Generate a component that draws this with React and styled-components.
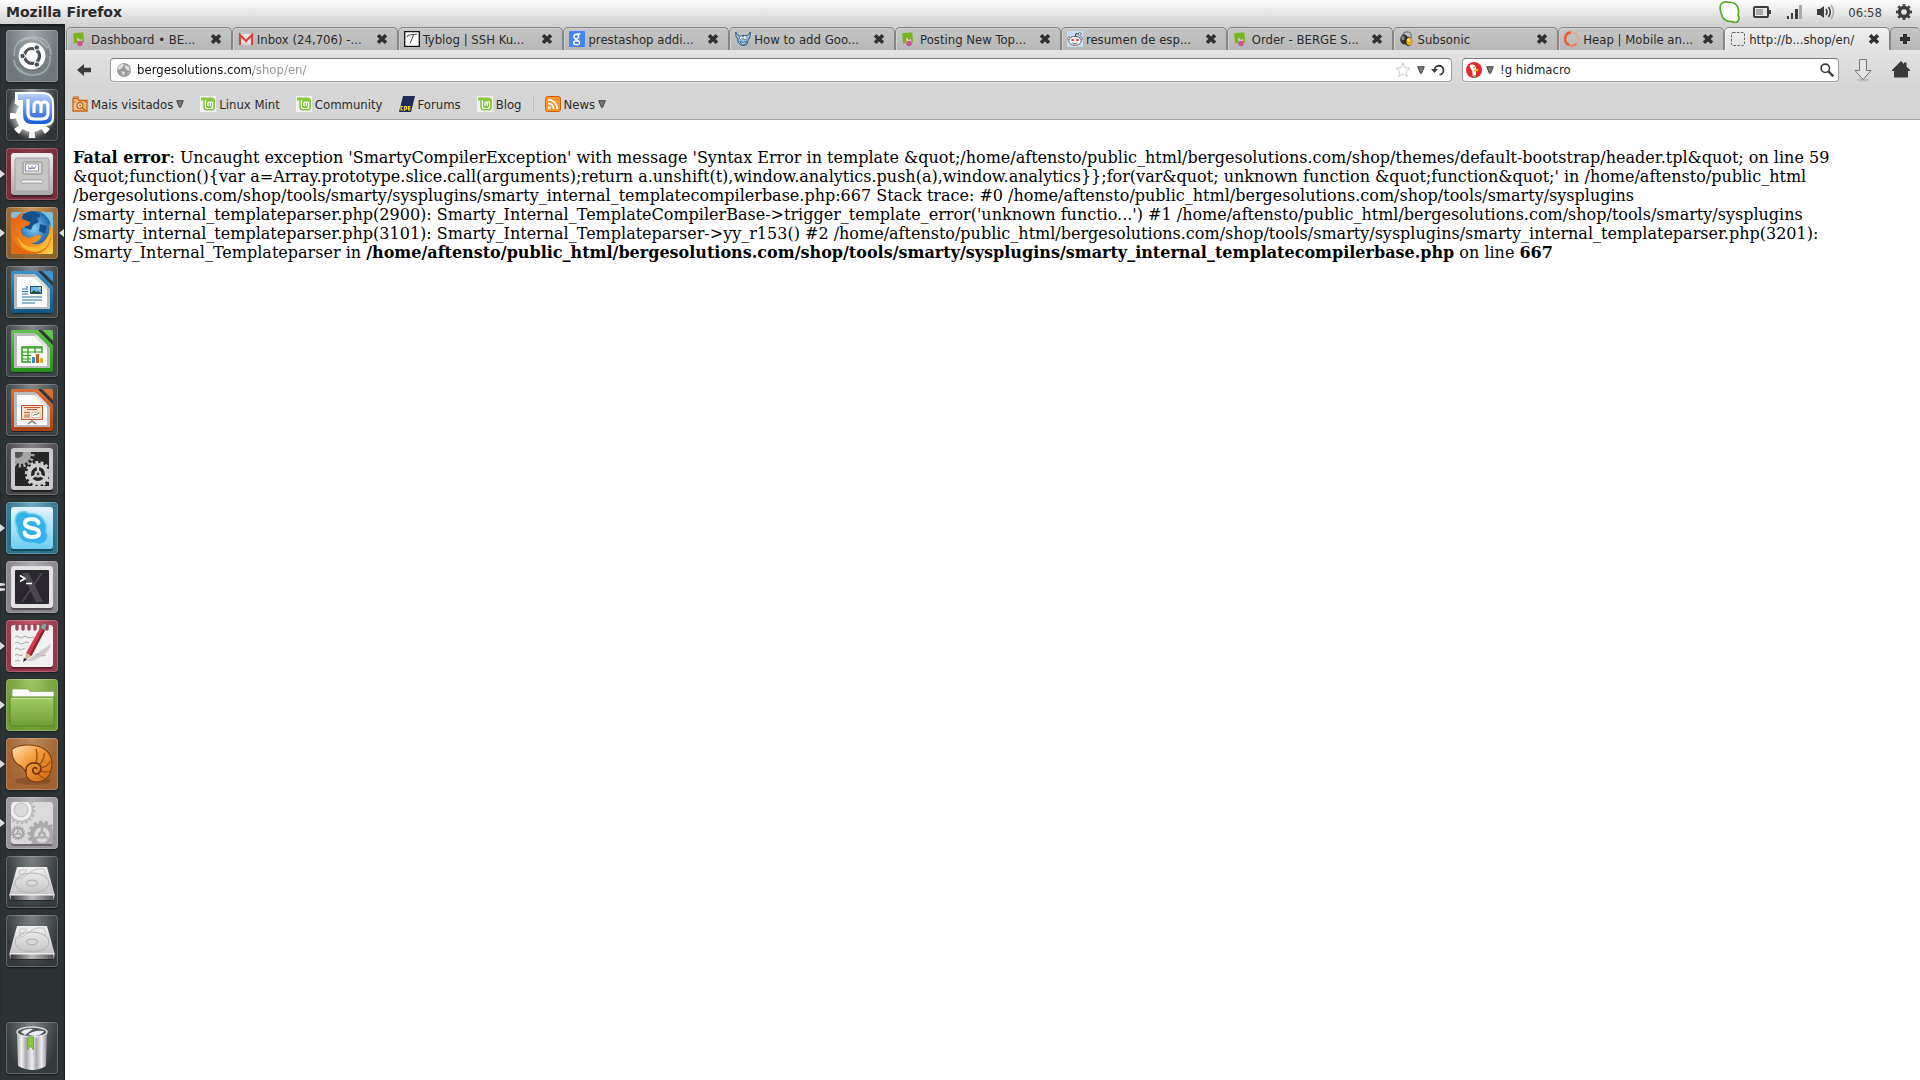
import { useState } from "react";
import styled, { createGlobalStyle } from "styled-components";

const GlobalStyle = createGlobalStyle`
  * {
    box-sizing: border-box;
  }
  body {
    margin: 0;
    background: #fff;
    color: #2b2b2b;
    font-family: "DejaVu Sans Condensed", "DejaVu Sans", sans-serif;
    font-size: 13px;
  }
  button, input {
    font: inherit;
    color: inherit;
    border: none;
    background: none;
    padding: 0;
    margin: 0;
    outline: none;
  }
  svg {
    display: block;
    flex: none;
  }
`;

const Desktop = styled.div`
  display: flex;
  flex-direction: column;
  min-height: 100vh;
`;

const TopBar = styled.header`
  display: flex;
  align-items: center;
  justify-content: space-between;
  height: 24px;
  padding: 0 8px 0 6px;
  background: linear-gradient(#fefefe, #d2d2d2);
`;

const WindowTitle = styled.h1`
  margin: 0;
  font-family: "DejaVu Sans", sans-serif;
  font-size: 14px;
  line-height: 22px;
  font-weight: 700;
`;

const Indicators = styled.div`
  display: flex;
  align-items: center;
`;

const Indicator = styled.button`
  display: flex;
  margin-right: ${(props) => props.$gap || 0}px;
  color: #3c3c3c;
`;

const Workspace = styled.div`
  display: flex;
  flex: 1;
`;

const Launcher = styled.nav`
  display: flex;
  flex-direction: column;
  gap: 7px;
  width: 65px;
  flex: none;
  padding: 6px 0;
  background: #2d3335;
  border-right: 1px solid #1f2324;
  box-shadow: inset 0 3px 3px -1px #16191a;
`;

const LauncherItem = styled.div`
  display: flex;
  align-items: center;
  margin-top: ${(props) => (props.$last ? "auto" : "0")};
`;

const Tile = styled.button`
  display: block;
  width: 52px;
  height: 52px;
  border-radius: 4px;
  overflow: hidden;
  background: radial-gradient(ellipse at 50% 0, ${(props) => props.$glow}, ${(props) => props.$fill} 75%);
  box-shadow: inset 0 0 0 1px rgba(255, 255, 255, 0.22), 0 1px 2px rgba(0, 0, 0, 0.5);
`;

const Browser = styled.div`
  flex: 1;
  min-width: 0;
`;

const TabStrip = styled.div`
  display: flex;
  height: 27px;
  padding: 3px 0 0 1px;
  background: #d2d2d2;
  border-bottom: 1px solid #e2e2e2;
`;

const Tab = styled.div`
  display: flex;
  align-items: center;
  flex: 1;
  min-width: 0;
  padding: 0 9px 0 5px;
  border: 1px solid #858585;
  border-bottom: none;
  border-radius: 5px 5px 0 0;
  box-shadow: inset 1px 1px 0 ${(props) => (props.$active ? "#f8f8f8" : "#d0d0d0")};
  background: ${(props) =>
    props.$active ? "linear-gradient(#efefef, #e2e2e2)" : "linear-gradient(#c6c6c6, #b7b7b7)"};
`;

const TabButton = styled.button`
  display: flex;
  align-items: center;
  gap: 3px;
  flex: 1;
  min-width: 0;
  white-space: nowrap;
`;

const TabClose = styled.button`
  display: flex;
  color: #303030;
`;

const NewTab = styled.button`
  display: flex;
  align-items: center;
  justify-content: center;
  width: 30px;
  border: 1px solid #858585;
  border-width: 1px 0 0 1px;
  border-radius: 5px 5px 0 0;
  color: #303030;
  background: linear-gradient(#c6c6c6, #b7b7b7);
`;

const Toolbars = styled.div`
  background: linear-gradient(#e2e2e2, #d5d5d5 35px);
  border-bottom: 1px solid #a3a3a3;
`;

const NavBar = styled.div`
  display: flex;
  align-items: center;
  height: 38px;
  padding: 0 10px 1px 11px;
`;

const NavButton = styled.button`
  display: flex;
  justify-content: center;
  width: ${(props) => props.$width}px;
  margin-right: ${(props) => props.$gap || 0}px;
  color: #3a3a3a;
`;

const Field = styled.label`
  display: flex;
  align-items: center;
  height: 24px;
  padding: 0 6px;
  border: 1px solid #9a9a9a;
  border-top-color: #777;
  border-radius: 4px;
  background: #fff;
  box-shadow: 0 1px 0 #e6e6e6;
`;

const UrlField = styled(Field)`
  flex: 1;
  gap: 6px;
`;

const SearchField = styled(Field)`
  width: 377px;
  gap: 4px;
  margin: 0 9px 0 10px;
  padding: 0 3px;
`;

/* the path part of the address is greyed out after the domain */
const UrlInput = styled.input`
  flex: 1;
  min-width: 0;
  background: linear-gradient(to right, #111 116px, #919191 116px);
  background-clip: text;
  -webkit-background-clip: text;
  color: transparent;
`;

const SearchInput = styled.input`
  flex: 1;
  min-width: 0;
  margin-left: 2px;
  color: #222;
`;

const BookmarkBar = styled.div`
  display: flex;
  align-items: center;
  gap: 16px;
  height: 30px;
  padding-left: 7px;
`;

const Bookmark = styled.a`
  display: flex;
  align-items: center;
  gap: 3px;
  color: inherit;
  text-decoration: none;
  white-space: nowrap;
`;

const FolderButton = styled.button`
  display: flex;
  align-items: center;
  gap: 3px;
  white-space: nowrap;
`;

const Separator = styled.span`
  width: 1px;
  height: 16px;
  margin: 0 -5px;
  background: #bdbdbd;
`;

const Page = styled.main`
  padding: 28px 8px 8px;
  color: #000;
  font-family: "DejaVu Serif", serif;
  font-size: 16px;
  line-height: 19px;
`;

const Message = styled.p`
  margin: 0;
`;

const Triangle = () => (
  <svg width="8" height="8" viewBox="0 0 8 8">
    <path d="M.7.7h6.6L4.6 7.3H3.4z" fill="#777" stroke="#444" strokeWidth="1" />
  </svg>
);

const Cross = () => (
  <svg width="12" height="12" viewBox="0 0 12 12">
    <path d="M2 2.2 10 9.8M10 2.2 2 9.8" stroke="currentColor" strokeWidth="3.6" />
  </svg>
);

const Favicon = ({ children }) => (
  <svg width="16" height="16" viewBox="0 0 16 16">
    {children}
  </svg>
);

const PrestaIcon = () => (
  <Favicon>
    <path d="M4.5 2.5Q5 .6 7 .6t2.6 1.6" fill="none" stroke="#a9c98a" />
    <path d="M1.2 2.3 11.3 1.6 12 11.5 2 12.5z" fill="#76b51b" />
    <path d="M5 6.2 8 9l2-1.2.3 3.7-4.6.8z" fill="#e9c9d6" />
    <circle cx="8" cy="12.5" r="2.8" fill="#d1558b" />
  </Favicon>
);

const MintIcon = () => (
  <Favicon>
    <path d="M0 0h16v16H0z" fill="#f2f2f2" />
    <path d="M1 1.5h10.5Q15 1.7 15 5v6q0 3.3-3.5 3.5h-5Q3.2 14.3 3.2 11V4.6H1z" fill="#86c83f" />
    <path d="M5.4 4v6.5q0 2 2 2h3.2q2 0 2-2V7q0-1.2-1.1-1.2T10.3 7v3M8 10V7q0-1.2 1.1-1.2T10.3 7" fill="none" stroke="#fff" strokeWidth="1.2" />
  </Favicon>
);

const favicons = {
  presta: <PrestaIcon />,
  gmail: (
    <Favicon>
      <path d="M1.5 3h13v11h-13z" fill="#efe9e2" />
      <path d="m3 14 5-5 5 5" fill="#ddd3ca" />
      <path d="M2 14V4l6 6 6-6v10" fill="none" stroke="#d5453a" strokeWidth="2.2" />
    </Favicon>
  ),
  tyblog: (
    <Favicon>
      <path d="M.7.7h14.6v14.6H.7z" fill="#fff" stroke="#111" strokeWidth="1.3" />
      <path d="M3 6Q3 3.6 7 3.7T13 3M9.5 4Q8 8 6 12.5" fill="none" stroke="#333" strokeWidth=".9" />
    </Favicon>
  ),
  google: (
    <Favicon>
      <rect width="16" height="16" rx="1" fill="#4484f3" />
      <circle cx="7.3" cy="5.5" r="2.3" fill="none" stroke="#fff" strokeWidth="1.5" />
      <ellipse cx="7.6" cy="11.7" rx="3" ry="2" fill="none" stroke="#fff" strokeWidth="1.4" />
      <path d="M8 3h3.5M7 7.5q-1.5 1 .5 1.5t2.5 1.5" fill="none" stroke="#fff" strokeWidth="1.3" />
    </Favicon>
  ),
  imp: (
    <Favicon>
      <path d="M.7 1Q0 6 3 8v3q2 4 6 3.500 4-.5 4-5Q16 6 15.300 1 14 4 11 5 8 3.500 5 5.500 2 4 .7 1z" fill="#8fc4ec" stroke="#285583" />
      <circle cx="6.5" cy="7" r="2" fill="#fff" stroke="#25415f" strokeWidth=".5" />
      <circle cx="10" cy="6.7" r="2" fill="#fff" stroke="#25415f" strokeWidth=".5" />
      <path d="M6.7 7v.9M10 6.7v.9M5 10.5q3 2.500 6.500-.3-1 3.500-3.500 3.300-2 0-3-3z" fill="#fff" stroke="#25415f" strokeWidth=".7" />
    </Favicon>
  ),
  reddit: (
    <Favicon>
      <path d="M0 0h16v16H0z" fill="#c9def4" />
      <path d="M8 6 9 2.5l3 .6" fill="none" stroke="#333" />
      <circle cx="12.7" cy="3" r="1.4" fill="#fff" stroke="#444" strokeWidth=".7" />
      <circle cx="2.2" cy="7.5" r="1.6" fill="#fff" stroke="#444" strokeWidth=".7" />
      <circle cx="13.8" cy="7.5" r="1.6" fill="#fff" stroke="#444" strokeWidth=".7" />
      <ellipse cx="8" cy="9.8" rx="6.2" ry="4.5" fill="#fff" stroke="#444" strokeWidth=".8" />
      <circle cx="5.5" cy="9" r="1.3" fill="#f33" />
      <circle cx="10.5" cy="9" r="1.3" fill="#f33" />
      <path d="M5.5 12q2.5 1.4 5 0" fill="none" stroke="#444" strokeWidth=".8" />
    </Favicon>
  ),
  subsonic: (
    <Favicon>
      <path d="M3.5 7Q3 1 8 .8T12.3 7" fill="none" stroke="#777" strokeWidth="1.3" />
      <ellipse cx="5.2" cy="8.5" rx="4" ry="5" fill="#353535" />
      <ellipse cx="4" cy="7" rx="1.6" ry="2.3" fill="#888" />
      <ellipse cx="9.5" cy="10.5" rx="3.8" ry="4.7" fill="#262626" />
      <ellipse cx="10.3" cy="10.5" rx="3" ry="4" fill="#eba90f" />
      <ellipse cx="9.7" cy="9" rx="1.3" ry="1.8" fill="#ffe45a" />
    </Favicon>
  ),
  heap: (
    <Favicon>
      <circle cx="8" cy="8" r="6.6" fill="none" stroke="#dda798" strokeWidth="1.6" />
      <path d="M7 1.4A6.600 6.600 0 0 0 5 14" fill="none" stroke="#e75e35" strokeWidth="2.6" />
      <path d="M5 14Q9 16 13 12.5" fill="none" stroke="#e87f60" strokeWidth="1.8" />
    </Favicon>
  ),
  blank: (
    <Favicon>
      <rect x="1.5" y="1.5" width="13" height="13" rx="1.5" fill="none" stroke="#666" strokeDasharray="2.6 1.3" />
    </Favicon>
  ),
};

const tabs = [
  { icon: "presta", label: "Dashboard • BE..." },
  { icon: "gmail", label: "Inbox (24,706) -..." },
  { icon: "tyblog", label: "Tyblog | SSH Ku..." },
  { icon: "google", label: "prestashop addi..." },
  { icon: "imp", label: "How to add Goo..." },
  { icon: "presta", label: "Posting New Top..." },
  { icon: "reddit", label: "resumen de esp..." },
  { icon: "presta", label: "Order - BERGE S..." },
  { icon: "subsonic", label: "Subsonic" },
  { icon: "heap", label: "Heap | Mobile an..." },
  { icon: "blank", label: "http://b...shop/en/" },
];

const Gear = ({ x, y, r, fill, hole }) => (
  <g transform={`translate(${x} ${y})`}>
    <circle r={r} fill="none" stroke={fill} strokeWidth={r * 0.45} />
    <circle
      r={r * 1.3}
      fill="none"
      stroke={fill}
      strokeWidth={r * 0.3}
      pathLength="140"
      strokeDasharray="5.5 4.5"
    />
    <path d={`M0 0V${-r}M0 0 ${-r * 0.87} ${r * 0.5}M0 0 ${r * 0.87} ${r * 0.5}`} stroke={fill} strokeWidth={r * 0.25} />
    <circle r={r * 0.38} fill={fill} />
    <circle r={r * 0.16} fill={hole} />
  </g>
);

const OfficeDoc = ({ id, light, dark, children }) => (
  <svg width="52" height="52" viewBox="0 0 52 52">
    <defs>
      <linearGradient id={id} x2="0" y2="1">
        <stop stopColor={light} />
        <stop offset="1" stopColor={dark} />
      </linearGradient>
    </defs>
    <rect x="5" y="6" width="42" height="42" rx="3" fill="#202425" />
    <path d="M7 5h25l15 15v25q0 2-2 2H7q-2 0-2-2V7q0-2 2-2z" fill={`url(#${id})`} />
    <path d="M8 8h21l15 15v20H8z" fill="#b9bab9" />
    <path d="M11 11h17l13 13v17H11z" fill="#fcfcfc" />
    <path d="m28 11 13 13v-4L31 10z" fill="#dfdfdf" />
    <path d="M32 5h4l11 11v4z" fill="#343839" />
    <path d="M36 5h9q2 0 2 2v9z" fill={light} />
    {children}
  </svg>
);

const DriveArt = () => (
  <svg width="52" height="52" viewBox="0 0 52 52">
    <defs>
      <linearGradient id="drive" x2="0" y2="1">
        <stop stopColor="#f1f1f1" />
        <stop offset="1" stopColor="#c5c5c5" />
      </linearGradient>
      <linearGradient id="driveEdge">
        <stop stopColor="#333" />
        <stop offset=".5" stopColor="#bbb" />
        <stop offset="1" stopColor="#555" />
      </linearGradient>
    </defs>
    <path d="M4 43h44v2H4z" fill="#24282a" />
    <path d="M11 11h30l7.5 27h-45z" fill="url(#drive)" />
    <path d="M3.5 38h45v2l-1 4h-43l-1-4z" fill="#eee" />
    <path d="M4.5 39.5h43V44h-43z" fill="url(#driveEdge)" />
    <ellipse cx="26" cy="27" rx="17" ry="10" fill="none" stroke="#b3b3b3" />
    <ellipse cx="26" cy="27" rx="5.5" ry="3" fill="#d9d9d9" stroke="#aaa" />
    <path d="M12 23q6-1 10-5t9-5h7l3 10M14 14h7l-4 4h-4z" fill="none" stroke="#c3c3c3" />
  </svg>
);

const launcher = [
  {
    name: "Dash",
    glow: "#a4abae",
    fill: "#6d777c",
    art: (
      <svg width="52" height="52" viewBox="0 0 52 52">
        <g fill="none" stroke="#cdd2d4" strokeWidth="1.5" opacity=".5">
          <path d="M8 26Q8 6 30 7q14 2 15 18M44 26q1 19-19 19Q10 44 8 30M14 12q14-10 28 6M38 42q-16 9-30-8" />
        </g>
        <circle cx="26" cy="27" r="14" fill="#505a5e" opacity=".5" />
        <circle cx="26" cy="26" r="13.5" fill="#fff" />
        <circle cx="26" cy="26" r="7.5" fill="none" stroke="#4a5052" strokeWidth="3.2" strokeDasharray="13.7 2" strokeDashoffset="-8.8" />
        <g fill="#4a5052" stroke="#fff" strokeWidth="1">
          <circle cx="16.5" cy="26" r="2.7" />
          <circle cx="30.8" cy="17.5" r="2.7" />
          <circle cx="30.8" cy="34.5" r="2.7" />
        </g>
      </svg>
    ),
  },
  {
    name: "Linux Mint",
    glow: "#8b8e8f",
    fill: "#303435",
    art: (
      <svg width="52" height="52" viewBox="0 0 52 52">
        <defs>
          <linearGradient id="mint" x2="0" y2="1">
            <stop stopColor="#b5cff7" />
            <stop offset="1" stopColor="#1558d8" />
          </linearGradient>
          <radialGradient id="mintGlow">
            <stop offset=".6" stopColor="#fff" stopOpacity=".6" />
            <stop offset="1" stopColor="#fff" stopOpacity="0" />
          </radialGradient>
        </defs>
        <circle cx="26" cy="25" r="25" fill="url(#mintGlow)" />
        <circle cx="26" cy="27" r="16" fill="#fff" />
        <circle cx="26" cy="27" r="18.5" fill="none" stroke="#fff" strokeWidth="7" pathLength="80" strokeDasharray="4 6" strokeDashoffset="-8" />
        <path d="M9 3h29q10 1 10 11v15q0 8-9 8H25q-10 0-10-10V13H9z" fill="#fff" />
        <path d="M12 5h25q9 1 9 9v14q0 7-8 7H26q-9 0-9-9V11h-5z" fill="url(#mint)" />
        <path d="M22 10v14q0 6 6 6h8q6 0 6-6v-7q0-4-3.500-4T35 17v7M28 24v-7q0-4 3.500-4T35 17" fill="none" stroke="#fff" strokeWidth="3.2" />
      </svg>
    ),
  },
  {
    name: "Files",
    glow: "#8d3a48",
    fill: "#782c3c",
    running: 1,
    art: (
      <svg width="52" height="52" viewBox="0 0 52 52">
        <defs>
          <linearGradient id="cabinet" x2="0" y2="1">
            <stop stopColor="#efefef" />
            <stop offset="1" stopColor="#a9a9a9" />
          </linearGradient>
        </defs>
        <rect x="5" y="6" width="42" height="43" rx="3" fill="#41212a" />
        <rect x="5" y="5" width="42" height="42" rx="3" fill="url(#cabinet)" />
        <rect x="9" y="10" width="34" height="33" rx="2" fill="#c6c6c6" stroke="#a2a2a2" />
        <rect x="17" y="14" width="19" height="12" rx="1" fill="#ddd" stroke="#888" />
        <rect x="19.5" y="16" width="13" height="7" fill="#fff" stroke="#999" />
        <path d="m22 18 2 3 2-3 2 3 2-3M22 21l7-1" fill="none" stroke="#6d8bb1" strokeWidth=".9" />
        <rect x="15" y="32" width="22" height="3" rx="1.5" fill="#f7f7f7" stroke="#999" />
      </svg>
    ),
  },
  {
    name: "Firefox",
    glow: "#cf9958",
    fill: "#8e6230",
    running: 1,
    active: true,
    art: (
      <svg width="52" height="52" viewBox="0 0 52 52">
        <defs>
          <radialGradient id="sea">
            <stop stopColor="#85d0f2" />
            <stop offset="1" stopColor="#1964a8" />
          </radialGradient>
          <linearGradient id="fox" x2="1" y2="1">
            <stop stopColor="#e85b10" />
            <stop offset=".6" stopColor="#f08c1c" />
            <stop offset="1" stopColor="#ffd84a" />
          </linearGradient>
        </defs>
        <rect x="5" y="5" width="42" height="42" rx="3" fill="#7bbfe0" />
        <circle cx="28" cy="21" r="17" fill="url(#sea)" />
        <path d="M17 7q8-5 16 0 3 3-2 4l2 4-6 3-2 5-6-2-2-7zM34 17l7 2-2 8-6-3z" fill="#174f8b" />
        <path d="M5 10q3 2 5 1 3-5 8-6-3 4-2 7l8 3q1 3-4 4l-5 3q-1 5 5 8 6 2 10-2 5-1 5 2-4 7-11 6 9 4 15-3 6-7 4-16l4 5V45q0 2-2 2H7q-2 0-2-2z" fill="url(#fox)" />
        <path d="M5 25q3 15 17 19 14 3 23-14-2 15-16 17H7q-2 0-2-2z" fill="#e66912" />
        <path d="M11 30q8 12 20 10 9-2 13-14 1 17-14 19-15-1-19-15z" fill="#fbbb32" />
      </svg>
    ),
  },
  {
    name: "Writer",
    glow: "#85898b",
    fill: "#3c4142",
    art: (
      <OfficeDoc id="writer" light="#3d94c9" dark="#125687">
        <path d="M16 23h6M16 25.5h6M16 28h6M16 31h20M16 34h20M16 37h13M20 21h2" stroke="#1d6fa5" />
        <rect x="24.5" y="20.5" width="11" height="7" fill="#6eb6e8" stroke="#164f7a" />
        <path d="m25 27 3-3 2 2 2-1 3 2z" fill="#234c23" />
        <circle cx="34" cy="22" r="1" fill="#fff04f" />
      </OfficeDoc>
    ),
  },
  {
    name: "Calc",
    glow: "#85898b",
    fill: "#3c4142",
    art: (
      <OfficeDoc id="calc" light="#5fc34e" dark="#259013">
        <path d="M16 22h20v15H16z" fill="#eefbea" stroke="#2d9c1b" strokeWidth="1.5" />
        <path d="M16 23h20M16 27h20M16 30.5h20M16 34h20M22 22v15M29 22v15" stroke="#2d9c1b" strokeWidth="1.2" />
        <path d="M25 28h13v11H25z" fill="#fff" />
        <path d="M26 32h3v6h-3z" fill="#2f8dcf" />
        <path d="M30 29h3v9h-3z" fill="#c45a1d" />
        <path d="M34 33h3v5h-3z" fill="#e8a72a" />
      </OfficeDoc>
    ),
  },
  {
    name: "Impress",
    glow: "#85898b",
    fill: "#3c4142",
    art: (
      <OfficeDoc id="impress" light="#d6703a" dark="#ab4210">
        <path d="M15.5 21.5h21v14h-21z" fill="#fae3d6" stroke="#bd4f1c" />
        <path d="M18 23.5h16M21 25.5h10M18 28.5h6M18 31h6M18 33h6" stroke="#c75c2c" />
        <path d="M26 28.5h8v5h-8z" fill="#fff" stroke="#c9a491" strokeWidth=".7" />
        <path d="m27 32 2-2 1 1 3-2" fill="none" stroke="#4ba23a" />
        <path d="m22 40 4-3 4 3" fill="none" stroke="#777" strokeWidth="1.5" />
      </OfficeDoc>
    ),
  },
  {
    name: "System Settings",
    glow: "#85818a",
    fill: "#464549",
    art: (
      <svg width="52" height="52" viewBox="0 0 52 52">
        <rect x="5" y="6" width="42" height="43" rx="3" fill="#202020" />
        <rect x="5" y="5" width="42" height="42" rx="3" fill="#c9c9c9" />
        <svg x="9" y="9" width="34" height="34" viewBox="9 9 34 34">
          <path d="M9 9h34v34H9z" fill="#262626" />
          <circle cx="15" cy="11" r="10" fill="#a5a5a5" />
          <circle cx="15" cy="11" r="11.5" fill="none" stroke="#a5a5a5" strokeWidth="4" pathLength="160" strokeDasharray="5 5" />
          <circle cx="12" cy="10" r="5" fill="#555" />
          <Gear x={32} y={31} r={9} fill="#cdcdcd" hole="#444" />
        </svg>
      </svg>
    ),
  },
  {
    name: "Skype",
    glow: "#72a9c2",
    fill: "#2d708c",
    running: 1,
    art: (
      <svg width="52" height="52" viewBox="0 0 52 52">
        <defs>
          <linearGradient id="skype" x2="0" y2="1">
            <stop stopColor="#e2f5fd" />
            <stop offset="1" stopColor="#6fcdf2" />
          </linearGradient>
        </defs>
        <rect x="5" y="6" width="42" height="43" rx="3" fill="#1a4a5e" />
        <rect x="5" y="5" width="42" height="42" rx="3" fill="url(#skype)" />
        <path d="M17 9.5q4 0 6 2 13-1 17 11 1 4 0 7 4 7-2 11.500-5 3-9 0-17 2-18-15Q8 20 10 14q2-4 7-4.500z" fill="#31b3ea" stroke="#79d1f2" strokeWidth="1.5" />
        <path d="M32.5 21q-1-4-7-4-6.500 0-6.500 4t6.500 5q7.500 1 7.500 5t-7 4q-6.500 0-7.500-4.500" fill="none" stroke="#fff" strokeWidth="4" strokeLinecap="round" />
      </svg>
    ),
  },
  {
    name: "Terminal",
    glow: "#b3adb5",
    fill: "#89838b",
    running: 2,
    art: (
      <svg width="52" height="52" viewBox="0 0 52 52">
        <rect x="5" y="6" width="42" height="43" rx="3" fill="#514b54" />
        <rect x="5" y="5" width="42" height="42" rx="3" fill="#e3e3e3" />
        <rect x="9" y="9" width="34" height="34" rx="1" fill="#29262e" />
        <path d="M16 12h7l14 29h-7zM35 12h2L17 41h-2z" fill="#4b4850" />
        <path d="m14 14.5 5 3-5 3" fill="none" stroke="#fff" strokeWidth="1.7" />
        <path d="M20 22.5h6" stroke="#fff" strokeWidth="1.7" />
      </svg>
    ),
  },
  {
    name: "Text Editor",
    glow: "#c15a6a",
    fill: "#97364a",
    running: 1,
    art: (
      <svg width="52" height="52" viewBox="0 0 52 52">
        <rect x="5" y="6" width="42" height="43" rx="3" fill="#5f2330" />
        <rect x="5" y="5" width="42" height="42" rx="3" fill="#f1f1f1" />
        <path d="M11 5v4M17 5v4M23 5v4M29 5v4M35 5v4M41 5v4" stroke="#a34456" strokeWidth="3.4" strokeLinecap="round" />
        <path d="M9 17q2-2 4 0t4 0 4 0 7 0M9 23q2-2 4 0t5 0 5 0M9 29q2-2 4 0t6-1M9 35q2-1 4 0t4 0M29 35q3-2 5 0t6 0M9 41q3-1 5 0" fill="none" stroke="#a6a6a6" />
        <path d="M20 41 45 24q-3 12-20 17z" fill="#bbb" opacity=".7" />
        <path d="M20 33 34 8l4 2-13 26z" fill="#d23a4e" />
        <path d="m23.5 35 13.500-26 2 1.500L25.500 36z" fill="#8f1f31" />
        <path d="m34 8 2-4q3-2 5 1l-2 5.500z" fill="#9a9a9a" stroke="#555" strokeWidth=".7" />
        <path d="m20 33 5 3-6.500 5z" fill="#d9b28b" />
        <path d="m18 38-1 4 4-2.500z" fill="#222" />
      </svg>
    ),
  },
  {
    name: "Home Folder",
    glow: "#a1c86a",
    fill: "#709b33",
    running: 1,
    art: (
      <svg width="52" height="52" viewBox="0 0 52 52">
        <defs>
          <linearGradient id="folder" x2="0" y2="1">
            <stop stopColor="#a3cb67" />
            <stop offset="1" stopColor="#709e39" />
          </linearGradient>
        </defs>
        <path d="M6 19v-7q0-1 1-2h15l2 2.500h23q1 0 1 1V19z" fill="#fafafa" stroke="#7a9b47" strokeWidth=".6" />
        <path d="M4 18h44v27q0 2-2 2H6q-2 0-2-2z" fill="url(#folder)" stroke="#5c8629" />
        <path d="M5 19.5h42" stroke="#c3df98" />
      </svg>
    ),
  },
  {
    name: "Nautilus",
    glow: "#bd8a5b",
    fill: "#a16332",
    running: 1,
    art: (
      <svg width="52" height="52" viewBox="0 0 52 52">
        <defs>
          <linearGradient id="shell" x2="1" y2="1">
            <stop stopColor="#ffe3b5" />
            <stop offset=".45" stopColor="#f39a36" />
            <stop offset="1" stopColor="#ca6410" />
          </linearGradient>
        </defs>
        <ellipse cx="27" cy="43" rx="18" ry="4" fill="#6f421e" opacity=".5" />
        <path d="M6 11q10-6 25-3 15 4 15 18-1 18-16 18-10-1-10-9-2-6-9-9-6-6-5-15z" fill="url(#shell)" stroke="#7e3c0b" strokeWidth="1.2" />
        <path d="M20 34q-1-7 6-9 9-1 9 6-1 5-5 5-4-1-3-5 2-3 4 0" fill="none" stroke="#6e350b" strokeWidth="1.6" />
        <path d="M30 25q2-8 0-14M33 27q6-6 5-12M35 30q8-2 9-7M35 33q6 2 9 0M33 36q2 4 6 4" fill="none" stroke="#a4510f" strokeWidth="1.4" />
      </svg>
    ),
  },
  {
    name: "Tweaks",
    glow: "#b7b4b9",
    fill: "#98949a",
    running: 1,
    art: (
      <svg width="52" height="52" viewBox="0 0 52 52">
        <rect x="5" y="6" width="42" height="43" rx="3" fill="#68646a" />
        <rect x="5" y="5" width="42" height="42" rx="3" fill="#dadada" />
        <svg x="5" y="5" width="42" height="42" viewBox="5 5 42 42">
          <circle cx="15" cy="13" r="9" fill="none" stroke="#eee" strokeWidth="4" />
          <circle cx="15" cy="13" r="13" fill="none" stroke="#bbb" strokeWidth="3" strokeDasharray="2.5 2" />
          <circle cx="15" cy="13" r="11.5" fill="none" stroke="#bbb" strokeWidth="1.5" />
          <circle cx="15" cy="13" r="7" fill="none" stroke="#bbb" strokeWidth="1" />
          <Gear x={12} y={36} r={5} fill="#a5a5a5" hole="#ddd" />
          <Gear x={36} y={38} r={10} fill="#aaa" hole="#ddd" />
        </svg>
      </svg>
    ),
  },
  { name: "Data drive", glow: "#7f8385", fill: "#34393b", art: <DriveArt /> },
  { name: "Backup drive", glow: "#7f8385", fill: "#34393b", art: <DriveArt /> },
  {
    name: "Trash",
    glow: "#7f8385",
    fill: "#34393b",
    last: true,
    art: (
      <svg width="52" height="52" viewBox="0 0 52 52">
        <defs>
          <linearGradient id="can">
            <stop stopColor="#aaa" />
            <stop offset=".15" stopColor="#f3f3f6" />
            <stop offset=".3" stopColor="#a5a5ab" />
            <stop offset=".5" stopColor="#f0f0f4" />
            <stop offset=".65" stopColor="#a8a8ae" />
            <stop offset=".82" stopColor="#efeff2" />
            <stop offset="1" stopColor="#8c8c91" />
          </linearGradient>
        </defs>
        <path d="M11 10h30l-1 34q-13 8-28 0z" fill="url(#can)" />
        <ellipse cx="26" cy="10" rx="15" ry="5" fill="#55575b" stroke="#dedee2" strokeWidth="1.5" />
        <path d="M15 10q5-4 12-3l-8 6zM22 13q5-5 16-4-2 4-9 5z" fill="#ececf4" />
        <path d="M21.5 15h6v13l-3-4-3 4z" fill="#88c83b" stroke="#639c24" strokeWidth=".7" />
      </svg>
    ),
  },
];

const Running = ({ count }) => (
  <svg width="6" height="12" viewBox="0 0 6 12">
    {count === 1 && <path d="M0 2v8l5-4z" fill="#dcdcdc" />}
    {count === 2 && <path d="M0 2v3l5-.5v-2zM0 7v3l5-.5v-2z" fill="#dcdcdc" />}
  </svg>
);

export default function App() {
  const [current, setCurrent] = useState(tabs.length - 1);
  const [url, setUrl] = useState("bergesolutions.com/shop/en/");
  const [query, setQuery] = useState("!g hidmacro");

  return (
    <Desktop>
      <GlobalStyle />
      <TopBar>
        <WindowTitle>Mozilla Firefox</WindowTitle>
        <Indicators>
          <Indicator aria-label="Skype" $gap={13}>
            <svg width="21" height="22" viewBox="0 0 21 22">
              <path d="M2 3Q5 0 10 1.300 17 1 19 7q1 4 0 7 2 3 0 6t-6 .5Q4 21 2.500 13 0 7 2 3z" fill="#fff" stroke="#4caa25" strokeWidth="1.6" />
            </svg>
          </Indicator>
          <Indicator aria-label="Battery" $gap={16}>
            <svg width="18" height="12" viewBox="0 0 18 12">
              <rect x="1" y="1" width="14" height="10" rx="1" fill="#e9e9e9" stroke="currentColor" strokeWidth="2" />
              <path d="M3 3h7v6H3z" fill="#aaa" />
              <path d="M16 4h2v4h-2z" fill="currentColor" />
            </svg>
          </Indicator>
          <Indicator aria-label="Network" $gap={15}>
            <svg width="15" height="14" viewBox="0 0 15 14">
              <path d="M0 11h2v3H0zM4 8h2v6H4zM8 4h3v10H8z" fill="currentColor" />
              <path d="M12 0h3v14h-3z" fill="#aaa" />
            </svg>
          </Indicator>
          <Indicator aria-label="Volume" $gap={13}>
            <svg width="18" height="16" viewBox="0 0 18 16">
              <path d="M0 5h3l4-3v12l-4-3H0z" fill="currentColor" />
              <path d="M9 5q2 3 0 6M11.5 3q3.5 5 0 10" fill="none" stroke="currentColor" strokeWidth="1.5" />
              <path d="M14 1q5 7 0 14" fill="none" stroke="#aaa" strokeWidth="1.5" />
            </svg>
          </Indicator>
          <Indicator $gap={14}>06:58</Indicator>
          <Indicator aria-label="System">
            <svg width="16" height="16" viewBox="0 0 16 16">
              <circle cx="8" cy="8" r="4.5" fill="none" stroke="currentColor" strokeWidth="3.4" />
              <circle cx="8" cy="8" r="7" fill="none" stroke="currentColor" strokeWidth="2" pathLength="80" strokeDasharray="5 5" strokeDashoffset="2.5" />
            </svg>
          </Indicator>
        </Indicators>
      </TopBar>
      <Workspace>
        <Launcher>
          {launcher.map((app) => (
            <LauncherItem key={app.name} $last={app.last}>
              <Running count={app.running} />
              <Tile aria-label={app.name} $glow={app.glow} $fill={app.fill}>
                {app.art}
              </Tile>
              {app.active && (
                <svg width="6" height="12" viewBox="0 0 6 12">
                  <path d="M6 2v8L1 6z" fill="#dcdcdc" />
                </svg>
              )}
            </LauncherItem>
          ))}
        </Launcher>
        <Browser>
          <TabStrip>
            {tabs.map((tab, i) => (
              <Tab key={i} $active={i === current}>
                <TabButton onClick={() => setCurrent(i)}>
                  {favicons[tab.icon]}
                  {tab.label}
                </TabButton>
                <TabClose aria-label="Close tab">
                  <Cross />
                </TabClose>
              </Tab>
            ))}
            <NewTab aria-label="New tab">
              <svg width="10" height="10" viewBox="0 0 10 10">
                <path d="M5 0v10M0 5h10" stroke="currentColor" strokeWidth="4" />
              </svg>
            </NewTab>
          </TabStrip>
          <Toolbars>
            <NavBar>
              <NavButton $width={16} $gap={18} aria-label="Back">
                <svg width="14" height="12" viewBox="0 0 14 12">
                  <path d="M0 6 7 0v3.800h7v4.400H7V12z" fill="currentColor" />
                </svg>
              </NavButton>
              <UrlField>
                <svg width="14" height="14" viewBox="0 0 14 14">
                  <circle cx="7" cy="7" r="7" fill="#999" />
                  <path d="M2 3q3-3 5-2L6 4 4 6 1 7q0-3 1-4zM8 2l4 2 1 4-3-1-2-2zM4 8l4 1-1 4Q5 12 4 8zM11 9h1l-2 3z" fill="#dedede" />
                </svg>
                <UrlInput aria-label="Address" value={url} onChange={(e) => setUrl(e.target.value)} />
                <NavButton $width={16} aria-label="Bookmark">
                  <svg width="16" height="16" viewBox="0 0 16 16">
                    <path d="m8 1 2 4.800 5 .4-3.800 3.300 1.200 5L8 11.800l-4.400 2.700 1.200-5L1 6.200l5-.4z" fill="#fff" stroke="#ccc" />
                  </svg>
                </NavButton>
                <NavButton $width={8} aria-label="History">
                  <Triangle />
                </NavButton>
                <NavButton $width={14} aria-label="Reload">
                  <svg width="14" height="14" viewBox="0 0 14 14">
                    <path d="M3.5 7a4.500 4.500 0 1 1 5 4.700" fill="none" stroke="currentColor" strokeWidth="1.8" />
                    <path d="M0 6h7L3.500 10z" fill="currentColor" />
                  </svg>
                </NavButton>
              </UrlField>
              <SearchField>
                <svg width="16" height="16" viewBox="0 0 16 16">
                  <circle cx="8" cy="8" r="8" fill="#e5262b" />
                  <path d="M3.5 3.500q2-1.500 4-.8Q10 3.500 10 7v6q-2 1.500-3.500 1Q7 9 5 7.500 4 5 3.500 3.500z" fill="#fff" />
                  <path d="M8 8q3-1.500 5-.5-1 2.500-5 2z" fill="#fcb813" />
                  <path d="m6.5 13 3.500 1v1.500H7z" fill="#5eb547" />
                  <circle cx="8" cy="5.5" r=".7" fill="#245" />
                </svg>
                <Triangle />
                <SearchInput aria-label="Search" value={query} onChange={(e) => setQuery(e.target.value)} />
                <NavButton $width={16} aria-label="Search">
                  <svg width="14" height="14" viewBox="0 0 14 14">
                    <circle cx="5.3" cy="5.3" r="4.2" fill="none" stroke="currentColor" strokeWidth="1.6" />
                    <path d="m8.5 8.5 4.8 4.8" stroke="currentColor" strokeWidth="2.4" />
                  </svg>
                </NavButton>
              </SearchField>
              <NavButton $width={30} $gap={14} aria-label="Downloads">
                <svg width="20" height="24" viewBox="0 0 20 24">
                  <ellipse cx="10" cy="22" rx="6" ry="1.5" fill="#bbb" />
                  <path d="M6.5 1.500h7v11h4.500L10 21.500 2 12.500h4.500z" fill="#e2e6e9" stroke="#777" />
                </svg>
              </NavButton>
              <NavButton $width={18} aria-label="Home">
                <svg width="18" height="17" viewBox="0 0 18 17">
                  <path d="m9 0 3 3V1.500h2.500v4L18 9v1h-2v6.500H2V10H0V9z" fill="currentColor" />
                </svg>
              </NavButton>
            </NavBar>
            <BookmarkBar>
              <FolderButton>
                <Favicon>
                  <path d="M1 15V2.500h5l1 2h8V15z" fill="#f4c187" stroke="#c6651a" strokeWidth="1.3" />
                  <path d="M1 1h6M1 6h3M12 6h3" stroke="#c6651a" />
                  <circle cx="8" cy="9.5" r="3" fill="#fbe3c6" stroke="#c6651a" strokeWidth="1.3" />
                  <circle cx="8" cy="9.5" r="1" fill="#c6651a" />
                  <path d="m10 11.5 3 2.500" stroke="#c6651a" strokeWidth="1.5" />
                </Favicon>
                Mais visitados
                <Triangle />
              </FolderButton>
              <Bookmark href="#mint">
                <MintIcon />
                Linux Mint
              </Bookmark>
              <Bookmark href="#community">
                <MintIcon />
                Community
              </Bookmark>
              <Bookmark href="#forums">
                <Favicon>
                  <path d="M4 0h12l-4 16H0z" fill="#1b2a59" />
                  <path d="M4 10.500H2v3.500h2M5.500 15v-4.500h2V13h-2M11.500 10.500H9.500V14h2M9.500 12.200h2" fill="none" stroke="#f3d51e" strokeWidth="1.2" />
                </Favicon>
                Forums
              </Bookmark>
              <Bookmark href="#blog">
                <MintIcon />
                Blog
              </Bookmark>
              <Separator />
              <FolderButton>
                <Favicon>
                  <rect x=".5" y=".5" width="15" height="15" rx="2" fill="#f79531" stroke="#cf5f10" />
                  <circle cx="4.3" cy="11.7" r="1.5" fill="#fff" />
                  <path d="M3 7.300a5.700 5.700 0 0 1 5.700 5.700M3 3.700A9.300 9.300 0 0 1 12.300 13" fill="none" stroke="#fff" strokeWidth="1.8" />
                </Favicon>
                News
                <Triangle />
              </FolderButton>
            </BookmarkBar>
          </Toolbars>
          <Page>
            <Message>
              <b>Fatal error</b>: Uncaught exception 'SmartyCompilerException' with message 'Syntax Error in template
              {" &quot;/home/aftensto/public_html/bergesolutions.com/shop/themes/default-bootstrap/header.tpl&quot; on line 59 "}
              {"&quot;function(){var a=Array.prototype.slice.call(arguments);return a.unshift(t),window.analytics.push(a),window.analytics}};for(var&quot; unknown function &quot;function&quot;' in /home/aftensto/public_html"}
              <wbr />
              /bergesolutions.com/shop/tools/smarty/sysplugins/smarty_internal_templatecompilerbase.php:667 Stack trace: #0
              /home/aftensto/public_html/bergesolutions.com/shop/tools/smarty/sysplugins
              <wbr />
              {"/smarty_internal_templateparser.php(2900): Smarty_Internal_TemplateCompilerBase->trigger_template_error('unknown functio...') #1 "}
              /home/aftensto/public_html/bergesolutions.com/shop/tools/smarty/sysplugins
              <wbr />
              {"/smarty_internal_templateparser.php(3101): Smarty_Internal_Templateparser->yy_r153() #2 "}
              /home/aftensto/public_html/bergesolutions.com/shop/tools/smarty/sysplugins/smarty_internal_templateparser.php(3201):
              Smarty_Internal_Templateparser in{" "}
              <b>/home/aftensto/public_html/bergesolutions.com/shop/tools/smarty/sysplugins/smarty_internal_templatecompilerbase.php</b>{" "}
              on line <b>667</b>
            </Message>
          </Page>
        </Browser>
      </Workspace>
    </Desktop>
  );
}
